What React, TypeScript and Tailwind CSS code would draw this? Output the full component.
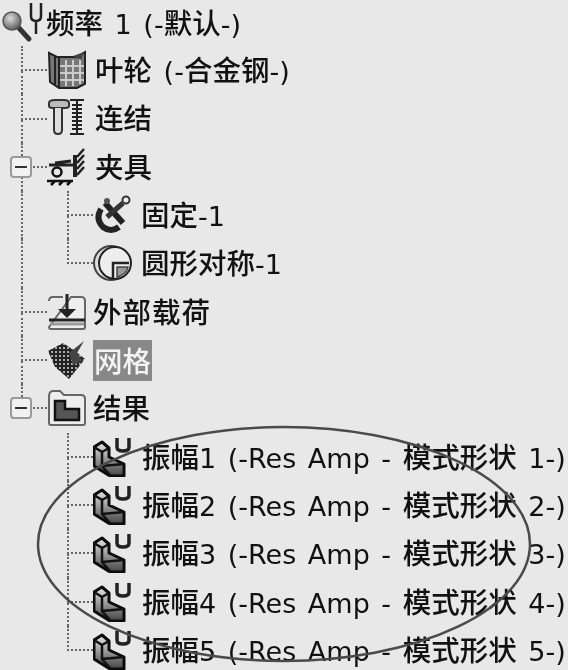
import type { ReactNode } from "react";

const Zh = ({ children }: { children: ReactNode }) => (
  <span className="text-[28.5px] font-medium [font-family:'Noto_Sans_CJK_SC',sans-serif]">{children}</span>
);

const ResultIcon = () => (
  <svg width="40" height="40" viewBox="0 0 40 40" className="shrink-0">
    <defs>
      <linearGradient id="rg" x1="0" y1="0" x2="0" y2="1">
        <stop offset="0" stopColor="#e8e8e8" />
        <stop offset="1" stopColor="#444" />
      </linearGradient>
    </defs>
    <path d="M1 10 L9 5 L16 11 V20 L31 27 V39 H17 L1 29 Z" fill="url(#rg)" stroke="#0c0c0c" strokeWidth="3" strokeLinejoin="round" />
    <path d="M1 10 L9 15 V29 L17 38 M9 15 L16 11 M9 29 L31 27" fill="none" stroke="#111" strokeWidth="2.5" />
    <path d="M24 1 V10 Q24 14 30 14 Q36 14 36 10 V1" fill="none" stroke="#222" strokeWidth="3.5" />
  </svg>
);

const rootIcon = (
  <svg width="42" height="42" viewBox="0 0 42 42" className="shrink-0">
    <defs>
      <radialGradient id="lens" cx="0.4" cy="0.35" r="0.7">
        <stop offset="0" stopColor="#ddd" />
        <stop offset="1" stopColor="#555" />
      </radialGradient>
    </defs>
    <path d="M16 25 L27 37" stroke="#333" strokeWidth="5" strokeLinecap="round" />
    <circle cx="10" cy="19" r="9" fill="url(#lens)" stroke="#555" strokeWidth="1.5" />
    <path d="M29 1 V14 Q29 19 34 19 Q39 19 39 14 V1 M34 19 V32" fill="none" stroke="#222" strokeWidth="2.5" />
  </svg>
);

const partIcon = (
  <svg width="40" height="40" viewBox="0 0 40 40" className="shrink-0">
    <path d="M2 3 L10 7 H30 L38 2 V34 L30 38 H12 L3 32 Z" fill="#777" stroke="#222" strokeWidth="2" />
    <path d="M8 6 V36 M12 8 V38" stroke="#222" strokeWidth="2" />
    <path d="M19 10 V36 M26 10 V36 M33 8 V34 M13 16 H37 M13 23 H37 M13 30 H37" stroke="#ccc" strokeWidth="2" />
    <path d="M26 6 L37 2 L34 10 Z" fill="#444" />
  </svg>
);

const boltIcon = (
  <svg width="40" height="40" viewBox="0 0 40 40" className="shrink-0">
    <path d="M2 5 Q2 2 8 2 H17 Q22 2 22 5 V8 Q22 10 18 10 H6 Q2 10 2 8 Z" fill="#bbb" stroke="#333" strokeWidth="2" />
    <path d="M7 10 V32 Q7 36 11 36 Q15 36 15 32 V10" fill="#ddd" stroke="#333" strokeWidth="2" />
    <path d="M23 2 H37 M25 7 H35 M25 11 H35 M25 15 H35 M25 19 H35 M25 23 H35 M25 27 H35 M25 31 H35 M23 36 H37" stroke="#222" strokeWidth="2.2" />
    <path d="M30 2 V36" stroke="#222" strokeWidth="2" />
  </svg>
);

const fixtureIcon = (
  <svg width="40" height="40" viewBox="0 0 40 40" className="shrink-0">
    <path d="M2 18 H26 M8 16 L24 14" stroke="#222" strokeWidth="3" />
    <circle cx="10" cy="25" r="4.5" fill="none" stroke="#111" strokeWidth="2.5" />
    <path d="M0 34 H26 M4 38 L8 34 M12 38 L16 34 M20 38 L24 34" stroke="#111" strokeWidth="2.5" />
    <path d="M28 8 V30" stroke="#222" strokeWidth="4" />
    <path d="M30 10 L37 2 M30 16 L37 8 M30 22 L37 14 M30 28 L37 20" stroke="#222" strokeWidth="2.5" />
  </svg>
);

const fixedIcon = (
  <svg width="40" height="40" viewBox="0 0 40 40" className="shrink-0">
    <path d="M12 8 L30 28" stroke="#222" strokeWidth="6" />
    <path d="M8 14 Q2 24 10 32 Q18 38 26 32" fill="none" stroke="#222" strokeWidth="6" />
    <path d="M14 22 L30 8" stroke="#333" strokeWidth="5" />
    <circle cx="33" cy="5" r="3.5" fill="#eee" stroke="#333" strokeWidth="2" />
    <circle cx="14" cy="6" r="3" fill="#555" />
  </svg>
);

const circularIcon = (
  <svg width="40" height="40" viewBox="0 0 40 40" className="shrink-0">
    <circle cx="18" cy="20" r="17" fill="#ddd" stroke="#444" strokeWidth="2" />
    <circle cx="22" cy="20" r="16" fill="#eee" stroke="#222" strokeWidth="2" />
    <path d="M20 36 V20 H36" fill="none" stroke="#222" strokeWidth="2.5" />
    <path d="M24 34 V24 H35 Q34 31 24 34 Z" fill="#999" stroke="#444" strokeWidth="1.5" />
  </svg>
);

const loadIcon = (
  <svg width="40" height="38" viewBox="0 0 40 38" className="shrink-0">
    <path d="M2 8 Q2 4 6 4 H16 M24 4 H34 Q38 4 38 8 V34 Q38 36 36 36 H4 Q2 36 2 34 Z" fill="#eee" stroke="#666" strokeWidth="2" />
    <path d="M20 1 V20" stroke="#222" strokeWidth="3" />
    <path d="M11 16 H29 L20 25 Z" fill="#222" />
    <path d="M2 27 H38" stroke="#222" strokeWidth="3" />
    <path d="M3 31 H37" stroke="#999" strokeWidth="3" />
  </svg>
);

const meshIcon = (
  <svg width="40" height="42" viewBox="0 0 40 42" className="shrink-0">
    <defs>
      <pattern id="mesh" width="4" height="4" patternUnits="userSpaceOnUse">
        <rect width="4" height="4" fill="#222" />
        <rect width="2" height="2" fill="#aaa" />
      </pattern>
    </defs>
    <path d="M1 12 L16 4 L28 12 L38 20 L30 30 L22 40 L8 28 Z" fill="url(#mesh)" />
    <path d="M22 14 L37 2 L30 14 L36 22 L26 26 Z" fill="#444" />
  </svg>
);

const folderIcon = (
  <svg width="40" height="38" viewBox="0 0 40 38" className="shrink-0">
    <path d="M2 8 Q2 2 6 2 H13 L17 6 H34 Q38 6 38 10 V34 Q38 36 36 36 H4 Q2 36 2 34 Z" fill="#eee" stroke="#666" strokeWidth="2" />
    <path d="M8 12 H18 V20 H32 V31 H8 Z" fill="#555" stroke="#111" strokeWidth="2.5" />
  </svg>
);

const minusBox = (
  <span className="absolute left-[-11px] top-1/2 z-10 flex h-[22px] w-[22px] -translate-y-1/2 items-center justify-center rounded-[4px] border-2 border-[#999] bg-[#f2f2f2]">
    <span className="h-[2px] w-[12px] bg-[#333]" />
  </span>
);

// one tree connector: vertical line with a branch at mid height
const Branch = ({ last, box }: { last?: boolean; box?: boolean }) => (
  <div className="relative flex w-[26px] shrink-0 flex-col self-stretch">
    <div className="flex-1 border-b-2 border-l-2 border-dotted border-[#666]" />
    <div className={last ? "flex-1" : "flex-1 border-l-2 border-dotted border-[#666]"} />
    {box && minusBox}
  </div>
);

const Row = ({ children }: { children: ReactNode }) => (
  <div className="flex h-[48.33px] items-center">{children}</div>
);

const Amp = ({ n }: { n: number }) => (
  <Row>
    <div className="w-[67px] shrink-0" />
    <Branch last={n === 5} />
    <ResultIcon />
    <span className="ml-[9px] whitespace-nowrap">
      <Zh>振幅</Zh>
      {n} (-Res Amp - <Zh>模式形状</Zh> {n}-)
    </span>
  </Row>
);

export default function App() {
  return (
    <div className="relative h-[670px] w-[568px] overflow-hidden bg-[#e8e8e8] text-[27px] leading-none text-[#111] blur-[0.6px] [word-spacing:3px] [font-family:'DejaVu_Sans',sans-serif]">
      <div className="flex h-[46px] items-center pl-[2px]">
        {rootIcon}
        <span className="ml-[2px] whitespace-nowrap">
          <Zh>频率</Zh> 1 (-<Zh>默认</Zh>-)
        </span>
      </div>

      <Row>
        <div className="w-[21px] shrink-0" />
        <Branch />
        {partIcon}
        <span className="ml-[8px] whitespace-nowrap">
          <Zh>叶轮</Zh> (-<Zh>合金钢</Zh>-)
        </span>
      </Row>
      <Row>
        <div className="w-[21px] shrink-0" />
        <Branch />
        {boltIcon}
        <span className="ml-[8px]"><Zh>连结</Zh></span>
      </Row>
      <Row>
        <div className="w-[21px] shrink-0" />
        <Branch box />
        {fixtureIcon}
        <span className="ml-[8px]"><Zh>夹具</Zh></span>
      </Row>
      <Row>
        <div className="w-[21px] shrink-0" />
        <div className="w-[46px] shrink-0 self-stretch border-l-2 border-dotted border-[#666]" />
        <Branch />
        {fixedIcon}
        <span className="ml-[8px] whitespace-nowrap"><Zh>固定</Zh>-1</span>
      </Row>
      <Row>
        <div className="w-[21px] shrink-0" />
        <div className="w-[46px] shrink-0 self-stretch border-l-2 border-dotted border-[#666]" />
        <Branch last />
        {circularIcon}
        <span className="ml-[8px] whitespace-nowrap"><Zh>圆形对称</Zh>-1</span>
      </Row>
      <Row>
        <div className="w-[21px] shrink-0" />
        <Branch />
        {loadIcon}
        <span className="ml-[6px] tracking-[1px]"><Zh>外部载荷</Zh></span>
      </Row>
      <Row>
        <div className="w-[21px] shrink-0" />
        <Branch />
        {meshIcon}
        <span className="ml-[6px] flex h-[41px] w-[59px] items-center justify-center bg-[#888] text-[#f4f4f4]"><Zh>网格</Zh></span>
      </Row>
      <Row>
        <div className="w-[21px] shrink-0" />
        <Branch last box />
        {folderIcon}
        <span className="ml-[6px]"><Zh>结果</Zh></span>
      </Row>

      {[1, 2, 3, 4, 5].map((n) => (
        <Amp key={n} n={n} />
      ))}

      <svg width="568" height="670" viewBox="0 0 568 670" fill="none" className="pointer-events-none absolute left-0 top-0">
        <ellipse cx="284" cy="544" rx="246" ry="117" stroke="#4a4a4a" strokeWidth="2.5" />
      </svg>
    </div>
  );
}
